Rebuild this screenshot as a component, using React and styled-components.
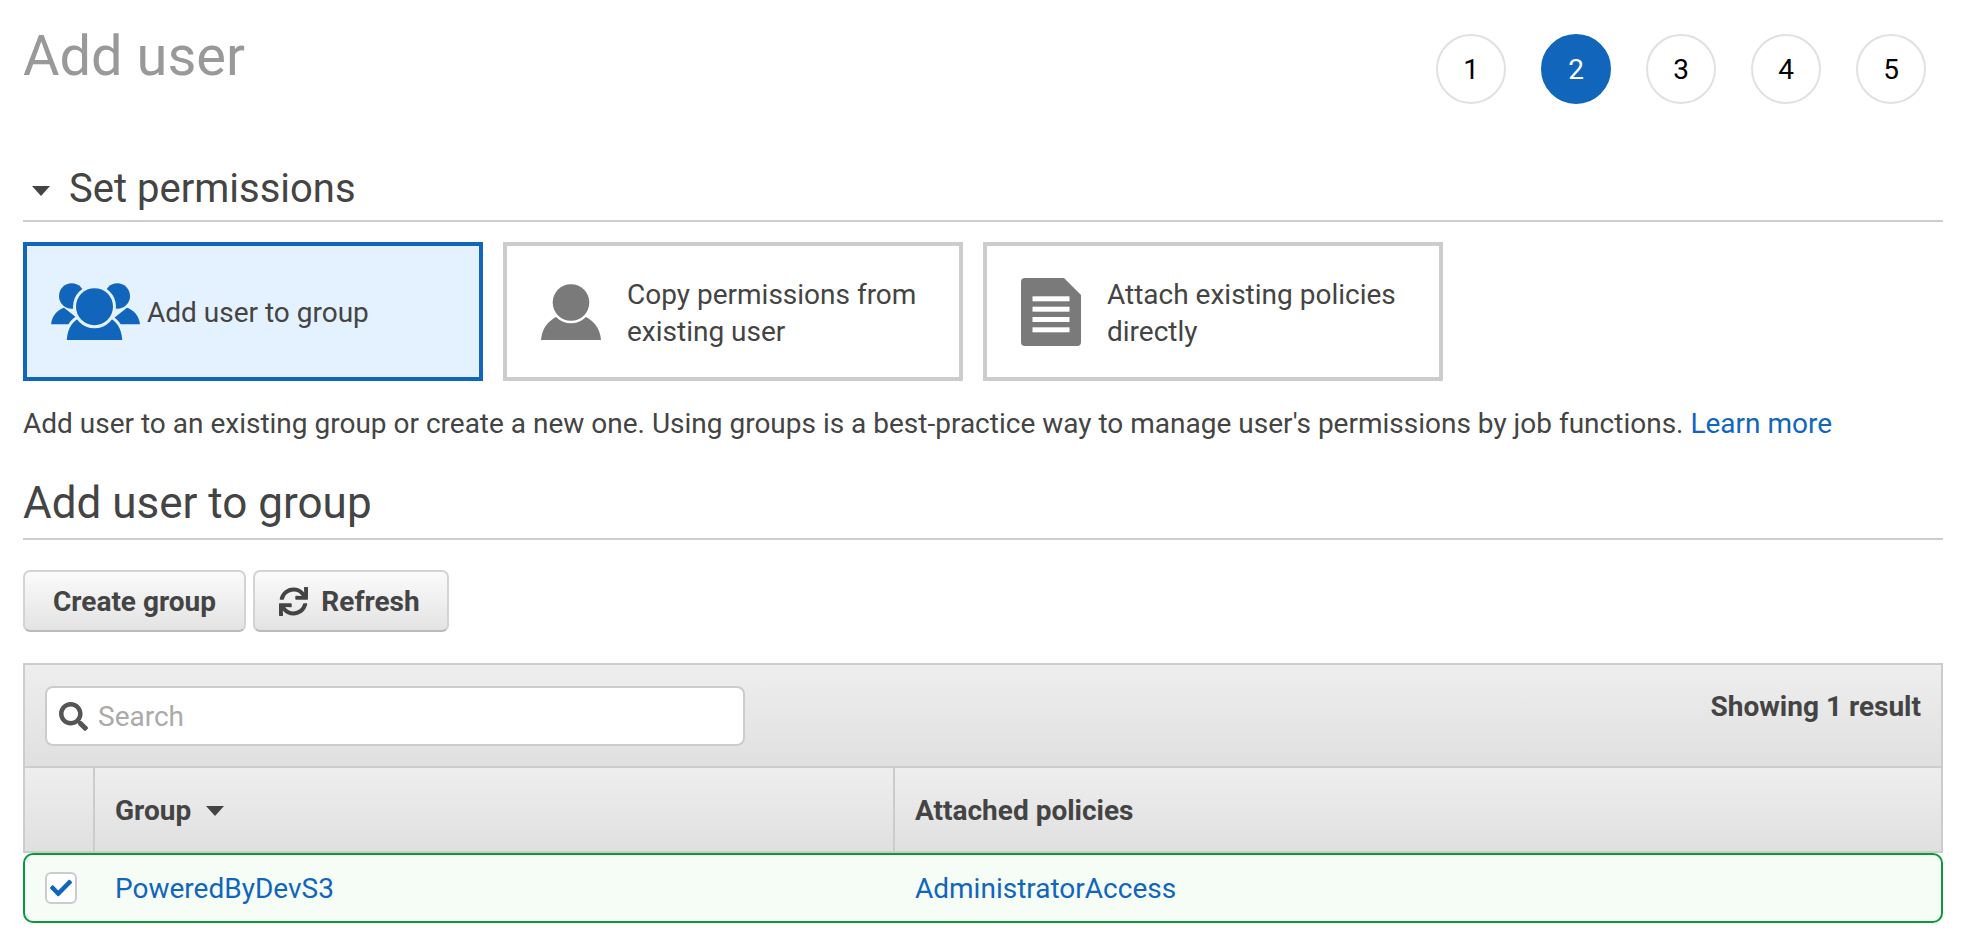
import React from "react";
import styled, { createGlobalStyle } from "styled-components";
import { FaCheck, FaSearch, FaSync } from "react-icons/fa";

const GlobalStyle = createGlobalStyle`
  html, body {
    margin: 0;
    background: #fff;
  }
  body {
    font-family: Roboto, "Liberation Sans", sans-serif;
    color: #444;
  }
`;

const Page = styled.div`
  width: 1980px;
  height: 949px;
  box-sizing: border-box;
  padding: 0 37px 0 23px;
  overflow: hidden;
`;
const Header = styled.div`
  display: flex;
  justify-content: space-between;
  align-items: flex-start;
  height: 165px;
`;
const Title = styled.h1`
  margin: 21px 0 0;
  font-size: 56px;
  line-height: 70px;
  font-weight: 400;
  color: #999;
`;
const Steps = styled.div`
  display: flex;
  gap: 35px;
  margin: 34px 17px 0 0;
`;
const Step = styled.div`
  width: 70px;
  height: 70px;
  box-sizing: border-box;
  border-radius: 50%;
  display: flex;
  align-items: center;
  justify-content: center;
  font-size: 28px;
  border: 2px solid ${(props) => (props.$active ? "#1166bb" : "#e1e1e1")};
  background: ${(props) => (props.$active ? "#1166bb" : "#fff")};
  color: ${(props) => (props.$active ? "#fff" : "#000")};
`;
const Section = styled.div`
  display: flex;
  align-items: center;
  height: 57px;
  padding-bottom: 9px;
  box-sizing: border-box;
  border-bottom: 2px solid #ccc;
  font-size: 40px;
  font-weight: 400;
`;
const Caret = styled.span`
  width: 0;
  height: 0;
  border-left: ${(props) => props.$size}px solid transparent;
  border-right: ${(props) => props.$size}px solid transparent;
  border-top: ${(props) => props.$size + 1}px solid #444;
`;
const SectionCaret = styled(Caret)`
  margin: 6px 19px 0 9px;
`;
const Options = styled.div`
  display: flex;
  gap: 20px;
  margin-top: 20px;
`;
const Option = styled.div`
  width: 460px;
  height: 139px;
  box-sizing: border-box;
  display: flex;
  align-items: center;
  border: 4px solid ${(props) => (props.$active ? "#1166bb" : "#ccc")};
  background: ${(props) => (props.$active ? "#e4f1fe" : "#fff")};
  font-size: 28px;
  line-height: 37px;
`;
const OptionIcon = styled.div`
  flex: 0 0 120px;
  box-sizing: border-box;
  display: flex;
  padding-left: ${(props) => props.$inset}px;
`;
const OptionText = styled.span`
  padding-top: 2px;
`;
const Description = styled.p`
  margin: 24px 0 0;
  font-size: 28px;
  line-height: 37px;
`;
const Link = styled.a`
  color: #1166bb;
  text-decoration: none;
`;
const SubHeading = styled.h2`
  margin: 35px 0 0;
  height: 61px;
  border-bottom: 2px solid #ccc;
  font-size: 44px;
  line-height: 52px;
  font-weight: 400;
`;
const Actions = styled.div`
  display: flex;
  gap: 7px;
  margin-top: 30px;
`;
const Button = styled.button`
  height: 62px;
  box-sizing: border-box;
  display: flex;
  align-items: center;
  justify-content: center;
  gap: 13px;
  width: ${(props) => props.$width}px;
  padding: 0;
  border: 2px solid #d3d3d3;
  border-bottom-color: #bbb;
  border-radius: 7px;
  background: linear-gradient(#fbfbfb, #e3e3e3);
  font-family: inherit;
  font-size: 28px;
  font-weight: 700;
  color: #444;
`;
const RefreshButton = styled(Button)`
  padding-right: 3px;
`;
const Table = styled.div`
  margin-top: 31px;
`;
const Toolbar = styled.div`
  height: 105px;
  box-sizing: border-box;
  display: flex;
  justify-content: space-between;
  align-items: flex-start;
  padding: 21px 20px 0 20px;
  border: 2px solid #ccc;
  background: linear-gradient(#eee, #e0e0e0);
`;
const Search = styled.div`
  width: 700px;
  height: 60px;
  box-sizing: border-box;
  display: flex;
  align-items: center;
  gap: 10px;
  padding-left: 12px;
  border: 2px solid #ccc;
  border-radius: 8px;
  background: #fff;
  font-size: 28px;
  color: #aaa;
  svg {
    color: #555;
  }
`;
const Result = styled.div`
  margin-top: 5px;
  font-size: 28px;
  line-height: 32px;
  font-weight: 700;
`;
const Columns = styled.div`
  height: 85px;
  box-sizing: border-box;
  display: grid;
  grid-template-columns: 70px 800px 1fr;
  border: 2px solid #ccc;
  border-top: 0;
  background: linear-gradient(#eee, #e0e0e0);
`;
const Column = styled.div`
  display: flex;
  align-items: center;
  gap: 15px;
  padding: 2px 0 0 20px;
  font-size: 28px;
  font-weight: 700;
  &:not(:last-child) {
    border-right: 2px solid #ccc;
  }
`;
const Row = styled.div`
  height: 70px;
  box-sizing: border-box;
  display: grid;
  grid-template-columns: 70px 800px 1fr;
  align-items: center;
  border: 2px solid #0a9a3c;
  border-radius: 10px;
  background: #f5fdf6;
  font-size: 28px;
`;
const Checkbox = styled.div`
  width: 32px;
  height: 32px;
  box-sizing: border-box;
  margin-left: 20px;
  display: flex;
  align-items: center;
  justify-content: center;
  border: 2px solid #ccc;
  border-radius: 6px;
  background: #fff;
  color: #1166bb;
`;
const Cell = styled.div`
  padding-left: 20px;
`;

const UsersIcon = () => (
  <svg width="89" height="57" viewBox="0 0 89 57" fill="#1166bb">
    <path d="M0 41.3C1 33 6 27 13 24.7L34 41.3Z" />
    <path d="M89 41.3C88 33 83 27 76 24.7L55 41.3Z" />
    <circle cx="20.7" cy="13" r="12.7" />
    <circle cx="66.3" cy="13" r="12.7" />
    <path
      d="M15.7 60C15.7 46 21 38 31 33.5Q43.5 30 56 33.5C66 38 71.3 46 71.3 60Z"
      stroke="#e4f1fe"
      strokeWidth="6"
      paintOrder="stroke"
    />
    <circle
      cx="43.5"
      cy="23.7"
      r="18.5"
      stroke="#e4f1fe"
      strokeWidth="6"
      paintOrder="stroke"
    />
  </svg>
);

const UserIcon = () => (
  <svg width="60" height="56" viewBox="0 0 60 56" fill="#7a7a7a">
    <path d="M0 56C1 44 7 37 16 32.500Q30 28 44 32.500C53 37 59 44 60 56Z" />
    <circle
      cx="30"
      cy="18.500"
      r="18.300"
      stroke="#fff"
      strokeWidth="5"
      paintOrder="stroke"
    />
  </svg>
);

const DocIcon = () => (
  <svg width="60" height="68" viewBox="0 0 60 68">
    <path
      d="M4 0H43L60 17V64Q60 68 56 68H4Q0 68 0 64V4Q0 0 4 0Z"
      fill="#7a7a7a"
    />
    <g fill="#fff">
      <rect x="11.500" y="18.300" width="37" height="5" />
      <rect x="11.500" y="28.700" width="37" height="5" />
      <rect x="11.500" y="39" width="37" height="5" />
      <rect x="11.500" y="49.300" width="37" height="5" />
    </g>
  </svg>
);

const App = () => (
  <>
    <GlobalStyle />
    <Page>
      <Header>
        <Title>Add user</Title>
        <Steps>
          {[1, 2, 3, 4, 5].map((step) => (
            <Step key={step} $active={step === 2}>
              {step}
            </Step>
          ))}
        </Steps>
      </Header>
      <Section>
        <SectionCaret $size={9} />
        Set permissions
      </Section>
      <Options>
        <Option $active>
          <OptionIcon $inset={24}>
            <UsersIcon />
          </OptionIcon>
          <OptionText>Add user to group</OptionText>
        </Option>
        <Option>
          <OptionIcon $inset={34}>
            <UserIcon />
          </OptionIcon>
          <OptionText>
            Copy permissions from
            <br />
            existing user
          </OptionText>
        </Option>
        <Option>
          <OptionIcon $inset={34}>
            <DocIcon />
          </OptionIcon>
          <OptionText>
            Attach existing policies
            <br />
            directly
          </OptionText>
        </Option>
      </Options>
      <Description>
        Add user to an existing group or create a new one. Using groups is a
        best-practice way to manage user's permissions by job functions.{" "}
        <Link>Learn more</Link>
      </Description>
      <SubHeading>Add user to group</SubHeading>
      <Actions>
        <Button $width={223}>Create group</Button>
        <RefreshButton $width={196}>
          <FaSync size={29} />
          Refresh
        </RefreshButton>
      </Actions>
      <Table>
        <Toolbar>
          <Search>
            <FaSearch size={29} />
            Search
          </Search>
          <Result>Showing 1 result</Result>
        </Toolbar>
        <Columns>
          <Column />
          <Column>
            Group
            <Caret $size={9} />
          </Column>
          <Column>Attached policies</Column>
        </Columns>
        <Row>
          <Checkbox>
            <FaCheck size={22} />
          </Checkbox>
          <Cell>
            <Link>PoweredByDevS3</Link>
          </Cell>
          <Cell>
            <Link>AdministratorAccess</Link>
          </Cell>
        </Row>
      </Table>
    </Page>
  </>
);

export default App;
